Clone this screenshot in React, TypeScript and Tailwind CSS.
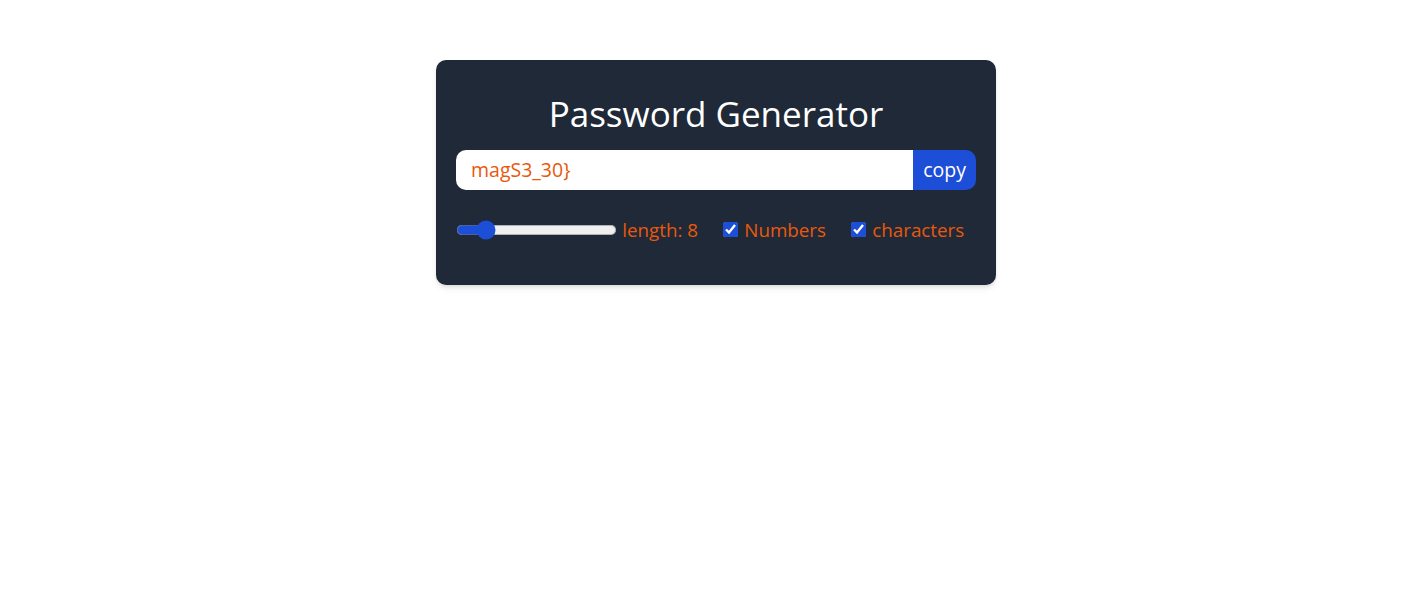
import { useState } from "react";

export default function App() {
  const [length, setLength] = useState(8);
  const [numbers, setNumbers] = useState(true);
  const [chars, setChars] = useState(true);
  const password = "magS3_30}";

  return (
    <div className="min-h-screen w-full bg-white font-['Open_Sans',sans-serif]">
      <div className="flex justify-center pl-[10px] pt-[60px]">
        <div className="w-[560px] rounded-[10px] bg-[#1f2937] px-5 pt-[34px] pb-[35px] shadow-md">
          <h1 className="mb-4 text-center text-[35px] leading-10 text-white">Password Generator</h1>

          {/* password field */}
          <div className="mb-5 flex h-10 overflow-hidden rounded-[10px]">
            <input
              type="text"
              value={password}
              readOnly
              className="w-full bg-white px-[15px] text-[19.5px] text-[#ea580c] outline-none"
            />
            <button className="shrink-0 bg-[#1d4ed8] px-[10px] text-[19.5px] text-white outline-none">copy</button>
          </div>

          {/* controls */}
          <div className="flex h-10 items-center gap-x-[25px] text-[18.8px] text-[#ea580c]">
            <div className="flex items-center gap-x-[5px]">
              <input
                type="range"
                min={6}
                max={20}
                value={length}
                onChange={(e) => setLength(Number(e.target.value))}
                className="cursor-pointer accent-[#1d4ed8] [zoom:1.25]"
              />
              <label>length: {length}</label>
            </div>
            <div className="flex items-center gap-x-[5px]">
              <input
                type="checkbox"
                checked={numbers}
                onChange={() => setNumbers((v) => !v)}
                className="accent-[#1d4ed8] [zoom:1.25]"
              />
              <label>Numbers</label>
            </div>
            <div className="flex items-center gap-x-[5px]">
              <input
                type="checkbox"
                checked={chars}
                onChange={() => setChars((v) => !v)}
                className="accent-[#1d4ed8] [zoom:1.25]"
              />
              <label>characters</label>
            </div>
          </div>
        </div>
      </div>
    </div>
  );
}
